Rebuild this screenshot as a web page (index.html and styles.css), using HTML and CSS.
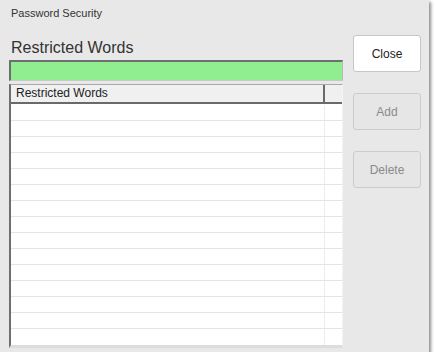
FILE: index.html
```html
<!DOCTYPE html>
<html>
<head>
<meta charset="utf-8">
<link rel="stylesheet" href="styles.css">
</head>
<body>
<div class="window">
  <div class="title">Password Security</div>
  <div class="main">
    <div class="left">
      <div class="heading">Restricted Words</div>
      <div class="input"></div>
      <div class="table">
        <div class="thead">
          <div class="th first">Restricted Words</div>
          <div class="th second"></div>
        </div>
        <div class="tbody">
          <div class="row"><div class="cell first"></div><div class="cell second"></div></div>
          <div class="row"><div class="cell first"></div><div class="cell second"></div></div>
          <div class="row"><div class="cell first"></div><div class="cell second"></div></div>
          <div class="row"><div class="cell first"></div><div class="cell second"></div></div>
          <div class="row"><div class="cell first"></div><div class="cell second"></div></div>
          <div class="row"><div class="cell first"></div><div class="cell second"></div></div>
          <div class="row"><div class="cell first"></div><div class="cell second"></div></div>
          <div class="row"><div class="cell first"></div><div class="cell second"></div></div>
          <div class="row"><div class="cell first"></div><div class="cell second"></div></div>
          <div class="row"><div class="cell first"></div><div class="cell second"></div></div>
          <div class="row"><div class="cell first"></div><div class="cell second"></div></div>
          <div class="row"><div class="cell first"></div><div class="cell second"></div></div>
          <div class="row"><div class="cell first"></div><div class="cell second"></div></div>
          <div class="row"><div class="cell first"></div><div class="cell second"></div></div>
          <div class="row last"><div class="cell first"></div><div class="cell second"></div></div>
        </div>
      </div>
    </div>
    <div class="right">
      <div class="btn active">Close</div>
      <div class="btn disabled">Add</div>
      <div class="btn disabled">Delete</div>
    </div>
  </div>
</div>
</body>
</html>
```

FILE: styles.css
```css
html, body {
  margin: 0;
  padding: 0;
  background: #ffffff;
}
body {
  font-family: "Liberation Sans", Arial, sans-serif;
  color: #333333;
}
.window {
  width: 429px;
  height: 352px;
  box-sizing: border-box;
  background: #e8e8e8;
  padding-top: 7px;
  box-shadow: 2px 2px 3px rgba(0, 0, 0, 0.45);
}
.title {
  font-size: 11px;
  line-height: 13px;
  padding-left: 11px;
  color: #333333;
  height: 15px;
}
.main {
  display: flex;
  margin-top: 13px;
}
.left {
  margin-left: 9px;
  width: 334px;
  padding-top: 4px;
}
.heading {
  font-size: 16px;
  line-height: 18px;
  padding-left: 2px;
  color: #333333;
}
.input {
  margin-top: 3px;
  height: 21px;
  box-sizing: border-box;
  background: #90ee90;
  border-top: 2px solid #6e6e6e;
  border-left: 2px solid #6e6e6e;
  border-right: 1px solid #b8b8b8;
  border-bottom: 1px solid #c8c8c8;
}
.table {
  margin-top: 3px;
  height: 264px;
  box-sizing: border-box;
  background: #ffffff;
  border-top: 1px solid #a8a8a8;
  border-left: 2px solid #6e6e6e;
  border-right: 1px solid #f4f4f4;
  border-bottom: 3px solid #dcdcdc;
  display: flex;
  flex-direction: column;
  overflow: hidden;
}
.thead {
  display: flex;
  height: 17px;
  flex: none;
  background: #f0f0f0;
  border-bottom: 2px solid #6a6a6a;
}
.th {
  font-size: 12px;
  line-height: 17px;
  color: #222222;
}
.th.first {
  width: 307px;
  padding-left: 5px;
  border-right: 2px solid #6a6a6a;
}
.th.second {
  flex: 1;
}
.tbody {
  flex: 1;
  display: flex;
  flex-direction: column;
  padding-top: 1px;
}
.row {
  display: flex;
  flex: none;
  height: 15px;
  border-bottom: 1px solid #e4e4e4;
}
.row.last {
  border-bottom: none;
  height: 16px;
}
.cell.first {
  width: 313px;
  border-right: 1px solid #ececec;
}
.cell.second {
  flex: 1;
}
.right {
  margin-left: 10px;
  display: flex;
  flex-direction: column;
  gap: 21px;
}
.btn {
  width: 68px;
  height: 37px;
  box-sizing: border-box;
  border-radius: 3px;
  display: flex;
  align-items: center;
  justify-content: center;
  font-size: 12px;
}
.btn.active {
  background: #ffffff;
  border: 1px solid #c6c6c6;
  color: #222222;
}
.btn.disabled {
  background: #e6e6e6;
  border: 1px solid #cccccc;
  color: #8a8a8a;
}
```
